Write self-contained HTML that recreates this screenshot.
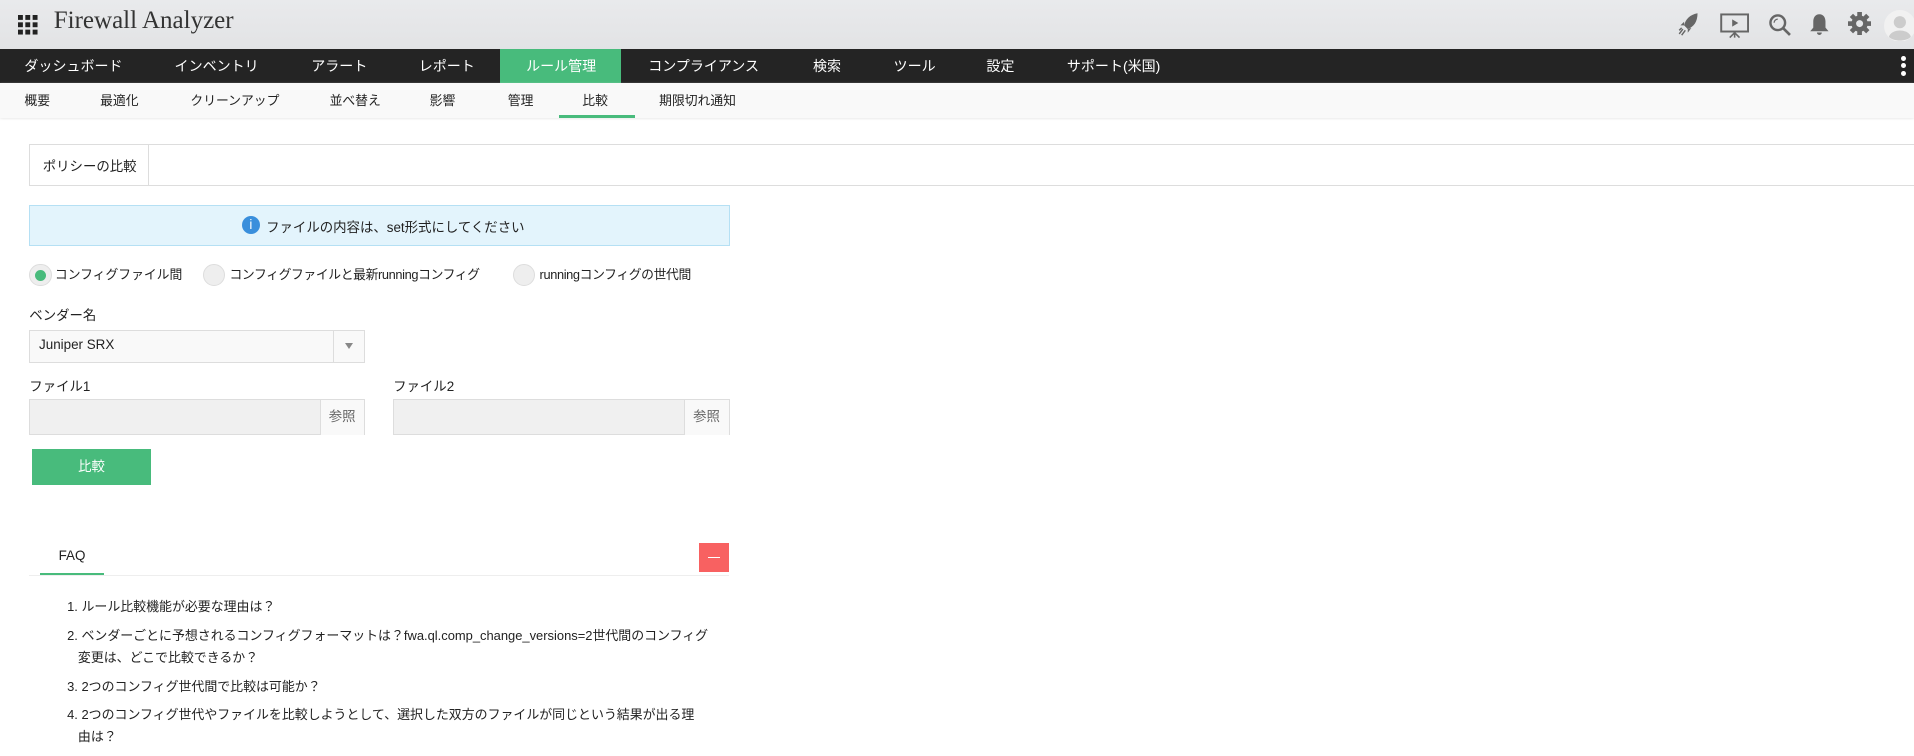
<!DOCTYPE html>
<html><head><meta charset="utf-8"><style>
html,body{margin:0;padding:0;width:1914px;height:756px;overflow:hidden;background:#fff}
#w{zoom:1.2207;width:1568px;height:620px;position:relative;font-family:"Liberation Sans","Noto Sans CJK JP",sans-serif;color:#222;font-size:11px}
.a{position:absolute;white-space:nowrap}
#hdr{left:0;top:0;width:1568px;height:40px;background:linear-gradient(#e9eaec,#e2e3e5)}
#nav{left:0;top:40px;width:1568px;height:28px;background:#242424}
#nav span{position:absolute;top:6px;color:#fff;font-size:11.5px}
#sub{left:0;top:68px;width:1568px;height:29px;background:#f9f9f9;box-shadow:0 1px 2px #e6e6e6}
#sub span{position:absolute;top:6px;font-size:10.5px;color:#222}
.radio{position:absolute;width:17px;height:17px;border-radius:50%;background:#eee;border:1px solid #ddd;top:216px}
.lbl{font-size:11px}
.faq{font-size:10.6px}
</style></head><body><div id="w">
<div id="hdr" class="a">
 <svg class="a" style="left:15px;top:12px" width="17" height="17"><g fill="#222"><rect x="0" y="0" width="4" height="4"/><rect x="6" y="0" width="4" height="4"/><rect x="12" y="0" width="4" height="4"/><rect x="0" y="6" width="4" height="4"/><rect x="6" y="6" width="4" height="4"/><rect x="12" y="6" width="4" height="4"/><rect x="0" y="12" width="4" height="4"/><rect x="6" y="12" width="4" height="4"/><rect x="12" y="12" width="4" height="4"/></g></svg>
 <div class="a" style="left:44px;top:6px;font-family:'Liberation Serif',serif;font-size:20.5px;color:#333">Firewall Analyzer</div>
 <svg class="a" style="left:1375px;top:10px" width="18" height="20" viewBox="0 0 18 20"><path d="M16 1 C10 2 6 6 5 11 L8 14 C13 12 16 8 16 1Z" fill="#666"/><path d="M5 11 L2 11 L5 8Z M8 14 L8 17 L11 13Z" fill="#666"/><path d="M4 14 L1 18 M6 15 L3 19 M3 13 L1 15" stroke="#666" stroke-width="1.2"/></svg>
 <svg class="a" style="left:1409px;top:10px" width="24" height="24" viewBox="0 0 24 24"><rect x="1" y="2" width="22" height="14" fill="none" stroke="#666" stroke-width="1.6"/><path d="M10 6 L15 9 L10 12Z" fill="#666"/><path d="M12 16 L12 21 M12 17 L8 21 M12 17 L16 21" stroke="#666" stroke-width="1.3"/></svg>
 <svg class="a" style="left:1448px;top:11px" width="20" height="20" viewBox="0 0 20 20"><circle cx="8" cy="8" r="6" fill="none" stroke="#666" stroke-width="2"/><path d="M12 12 L18 18" stroke="#666" stroke-width="2.2"/><path d="M5 8 A3 3 0 0 1 8 5" stroke="#666" fill="none"/></svg>
 <svg class="a" style="left:1482px;top:11px" width="17" height="19" viewBox="0 0 17 19"><path d="M8.5 1 C5 1 3.5 4 3.5 7 L3.5 12 L1 15 L16 15 L13.5 12 L13.5 7 C13.5 4 12 1 8.5 1Z M6.5 16 A2 2 0 0 0 10.5 16Z" fill="#666"/></svg>
 <svg class="a" style="left:1514px;top:10px" width="19" height="19" viewBox="0 0 20 20"><g fill="#666" transform="translate(10 10)"><rect x="-2" y="-10" width="4" height="20"/><rect x="-2" y="-10" width="4" height="20" transform="rotate(45)"/><rect x="-2" y="-10" width="4" height="20" transform="rotate(90)"/><rect x="-2" y="-10" width="4" height="20" transform="rotate(135)"/><circle r="7"/></g><circle cx="10" cy="10" r="3" fill="#e6e7e9"/></svg>
 <svg class="a" style="left:1543px;top:8px" width="25" height="26" viewBox="0 0 25 26"><circle cx="13" cy="13" r="13" fill="#f1f1f1"/><circle cx="13" cy="10" r="5" fill="#ccc"/><path d="M4 22 C6 15 20 15 22 22 C18 26 8 26 4 22Z" fill="#ccc"/></svg>
</div>
<div id="nav" class="a">
 <div class="a" style="left:410px;top:0;width:99px;height:28px;background:#48bb7c"></div>
 <span style="left:20px">ダッシュボード</span><span style="left:143px">インベントリ</span><span style="left:255px">アラート</span><span style="left:343px">レポート</span><span style="left:431px">ルール管理</span><span style="left:531px">コンプライアンス</span><span style="left:666px">検索</span><span style="left:732px">ツール</span><span style="left:808px">設定</span><span style="left:874px">サポート(米国)</span>
 <div class="a" style="left:1557px;top:6px;width:4px;line-height:0"><div style="width:4px;height:4px;border-radius:2px;background:#fff;margin-bottom:2px"></div><div style="width:4px;height:4px;border-radius:2px;background:#fff;margin-bottom:2px"></div><div style="width:4px;height:4px;border-radius:2px;background:#fff"></div></div>
</div>
<div id="sub" class="a">
 <span style="left:20px">概要</span><span style="left:82px">最適化</span><span style="left:156px">クリーンアップ</span><span style="left:270px">並べ替え</span><span style="left:352px">影響</span><span style="left:416px">管理</span><span style="left:477px">比較</span><span style="left:540px">期限切れ通知</span>
 <div class="a" style="left:458px;top:26px;width:62px;height:3px;background:#48bb7c"></div>
</div>
<div class="a" style="left:24px;top:118px;width:1544px;height:33px;border:1px solid #ddd;border-right:none"></div>
<div class="a" style="left:121px;top:119px;width:1px;height:33px;background:#ddd"></div>
<div class="a lbl" style="left:35px;top:127px">ポリシーの比較</div>
<div class="a" style="left:24px;top:168px;width:572px;height:32px;background:#e3f4fc;border:1px solid #b5e0f4"></div>
<div class="a" style="left:198px;top:177px;width:15px;height:15px;border-radius:50%;background:#3a8fdc;color:#fff;font-size:11px;text-align:center;line-height:15px">i</div>
<div class="a lbl" style="left:218px;top:177px">ファイルの内容は、set形式にしてください</div>
<div class="radio" style="left:24px"><div style="position:absolute;left:4px;top:4px;width:9px;height:9px;border-radius:50%;background:#48bb7c"></div></div>
<div class="a lbl" style="left:45px;top:216px;font-size:10.5px">コンフィグファイル間</div>
<div class="radio" style="left:166px"></div>
<div class="a lbl" style="left:188px;top:216px;font-size:10.5px;letter-spacing:-0.3px">コンフィグファイルと最新runningコンフィグ</div>
<div class="radio" style="left:420px"></div>
<div class="a lbl" style="left:442px;top:216px;font-size:10.5px;letter-spacing:-0.3px">runningコンフィグの世代間</div>
<div class="a lbl" style="left:24px;top:249px">ベンダー名</div>
<div class="a" style="left:24px;top:270px;width:273px;height:26px;background:#f9f9f9;border:1px solid #ddd"></div>
<div class="a" style="left:273px;top:271px;width:1px;height:26px;background:#ddd"></div>
<div class="a" style="left:283px;top:281px;border-left:4px solid transparent;border-right:4px solid transparent;border-top:5px solid #888"></div>
<div class="a lbl" style="left:32px;top:276px">Juniper SRX</div>
<div class="a lbl" style="left:24px;top:307px">ファイル1</div>
<div class="a lbl" style="left:322px;top:307px">ファイル2</div>
<div class="a" style="left:24px;top:327px;width:273px;height:28px;background:#f0f0f0;border:1px solid #ddd"></div>
<div class="a" style="left:262px;top:328px;width:35px;height:28px;background:#f9f9f9;border-left:1px solid #ddd;color:#666;text-align:center;line-height:28px">参照</div>
<div class="a" style="left:322px;top:327px;width:274px;height:28px;background:#f0f0f0;border:1px solid #ddd"></div>
<div class="a" style="left:560px;top:328px;width:36px;height:28px;background:#f9f9f9;border-left:1px solid #ddd;color:#666;text-align:center;line-height:28px">参照</div>
<div class="a" style="left:26px;top:368px;width:98px;height:29px;background:#48bb7c;color:#fff;text-align:center;line-height:29px">比較</div>
<div class="a lbl" style="left:48px;top:449px">FAQ</div>
<div class="a" style="left:24px;top:471px;width:573px;height:1px;background:#eee"></div>
<div class="a" style="left:33px;top:469px;width:52px;height:2px;background:#48bb7c"></div>
<div class="a" style="left:573px;top:445px;width:24px;height:24px;background:#f86161"><div style="position:absolute;left:7px;top:11px;width:10px;height:1px;background:#fff"></div></div>
<div class="a faq" style="left:55px;top:488px">1. ルール比較機能が必要な理由は？</div>
<div class="a faq" style="left:55px;top:512px;line-height:18px">2. ベンダーごとに予想されるコンフィグフォーマットは？fwa.ql.comp_change_versions=2世代間のコンフィグ<br>&nbsp;&nbsp;&nbsp;変更は、どこで比較できるか？</div>
<div class="a faq" style="left:55px;top:554px">3. 2つのコンフィグ世代間で比較は可能か？</div>
<div class="a faq" style="left:55px;top:577px;line-height:18px">4. 2つのコンフィグ世代やファイルを比較しようとして、選択した双方のファイルが同じという結果が出る理<br>&nbsp;&nbsp;&nbsp;由は？</div>
</div></body></html>
